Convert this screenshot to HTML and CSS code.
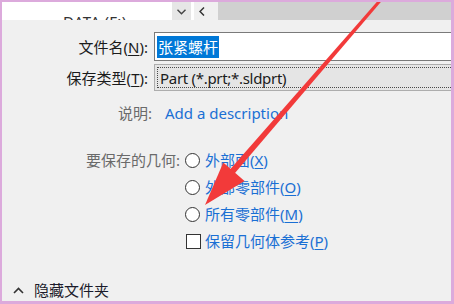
FILE: index.html
```html
<!DOCTYPE html>
<html lang="zh-CN">
<head>
    <meta charset="UTF-8">
    <meta name="viewport" content="width=device-width, initial-scale=1.0">
    <title>另存为</title>
    <link rel="stylesheet" href="styles.css">
</head>
<body>
    <div class="frame">
        <div class="crumbs">
            <div class="crumb-path"><span class="drive">DATA (F:)</span></div>
            <div class="crumb-drop">
                <svg width="9" height="6" viewBox="0 0 9 6"><path d="M0.5 0.8 L4.5 4.8 L8.5 0.8" fill="none" stroke="#444" stroke-width="1.4"/></svg>
            </div>
            <div class="crumb-back">
                <svg width="6" height="9" viewBox="0 0 6 9"><path d="M5 0.5 L1 4.5 L5 8.5" fill="none" stroke="#333" stroke-width="1.5"/></svg>
            </div>
            <div class="crumb-rest"></div>
        </div>

        <div class="panel">
            <div class="row row-name">
                <label class="label">文件名(<u>N</u>):</label>
                <div class="field"><span class="sel">张紧螺杆</span></div>
            </div>
            <div class="row row-type">
                <label class="label">保存类型(<u>T</u>):</label>
                <div class="combo"><div class="combo-focus">Part (*.prt;*.sldprt)</div></div>
            </div>
            <div class="row row-desc">
                <span class="label muted">说明:</span>
                <a href="#" class="link">Add a description</a>
            </div>
            <div class="row row-geo">
                <span class="label muted">要保存的几何:</span>
                <div class="options">
                    <div class="opt"><span class="radio"></span>外部面(<u>X</u>)</div>
                    <div class="opt"><span class="radio"></span>外部零部件(<u>O</u>)</div>
                    <div class="opt"><span class="radio"></span>所有零部件(<u>M</u>)</div>
                    <div class="opt"><span class="check"></span>保留几何体参考(<u>P</u>)</div>
                </div>
            </div>
            <div class="footer">
                <svg width="11" height="7" viewBox="0 0 11 7"><path d="M1 6 L5.5 1.5 L10 6" fill="none" stroke="#333" stroke-width="1.6"/></svg>
                <span>隐藏文件夹</span>
            </div>
        </div>

        <!-- red annotation arrow over the dialog -->
        <svg class="arrow" width="454" height="304" viewBox="0 0 454 304">
            <polygon points="382.9,-5 385.1,-3 233.3,175 228.7,171" fill="#f23a3a"/>
            <polygon points="205,205 223.3,162.6 244.5,181" fill="#f23a3a"/>
        </svg>
    </div>
</body>
</html>
```

FILE: styles.css
```css
html, body {
    margin: 0;
    padding: 0;
}
body {
    font-family: "Noto Sans", "Noto Sans CJK SC", sans-serif;
    font-size: 15px;
    color: #1b1b1b;
}
.frame {
    position: relative;
    width: 454px;
    height: 304px;
    box-sizing: border-box;
    border-style: solid;
    border-color: #dcaadc;
    border-width: 2px 3px 3px 2px;
    display: flex;
    flex-direction: column;
    overflow: hidden;
}

/* address bar, mostly hidden */
.crumbs {
    display: flex;
    height: 18px;
    flex-shrink: 0;
    overflow: hidden;
}
.crumb-path {
    width: 170px;
    background: #fff;
    overflow: hidden;
}
.drive {
    display: block;
    padding: 9px 0 0 61px;
    font-size: 15px;
    line-height: 20px;
    color: #333;
    letter-spacing: 0.3px;
}
.crumb-drop {
    width: 19px;
    background: #e6e6e6;
    display: flex;
    justify-content: center;
    padding-top: 7px;
    box-sizing: border-box;
}
.crumb-back {
    width: 27px;
    background: #f0f0f0;
    display: flex;
    justify-content: center;
    padding: 5px 8px 0 0;
    box-sizing: border-box;
    border-left: 3px solid #fff;
}
.crumb-rest {
    flex: 1;
    background: #d0d0d0;
}

.panel {
    flex: 1;
    background: #f0f0f0;
    display: flex;
    flex-direction: column;
}
.row {
    display: flex;
    align-items: center;
}
.label {
    text-align: right;
    flex-shrink: 0;
    line-height: 20px;
}
.label u, .opt u {
    text-underline-offset: 2px;
}
.muted {
    color: #6a6a6a;
}

.row-name {
    margin-top: 12px;
}
.row-name .label, .row-type .label {
    width: 146px;
    margin-right: 6px;
}
.field {
    flex: 1;
    height: 29px;
    box-sizing: border-box;
    border: 1px solid #7a7a7a;
    border-right: none;
    background: #fff;
    display: flex;
    align-items: center;
    padding-left: 2px;
}
.sel {
    background: #0078d7;
    color: #fff;
    line-height: 22px;
    padding: 0 1px;
}

.row-type {
    margin-top: 3px;
}
.combo {
    flex: 1;
    height: 27px;
    box-sizing: border-box;
    border: 1px solid #adadad;
    border-right: none;
    background: #e5e5e5;
    padding: 2px 0 2px 2px;
}
.combo-focus {
    height: 100%;
    box-sizing: border-box;
    border: 1px dotted #4a4a4a;
    border-right: none;
    line-height: 20px;
    padding-left: 2px;
    letter-spacing: -0.3px;
}

.row-desc {
    margin-top: 12px;
}
.row-desc .label {
    width: 150px;
}
.link {
    margin-left: 13px;
    color: #1a6fd4;
    text-decoration: none;
    line-height: 20px;
}

.row-geo {
    margin-top: 27px;
    align-items: flex-start;
}
.row-geo .label {
    width: 178px;
}
.options {
    margin-left: 5px;
    display: flex;
    flex-direction: column;
    gap: 7px;
}
.opt {
    display: flex;
    align-items: center;
    line-height: 20px;
    color: #1a6fd4;
}
.radio, .check {
    width: 15px;
    height: 15px;
    box-sizing: border-box;
    border: 1px solid #333;
    background: #fff;
    margin-right: 5px;
    flex-shrink: 0;
}
.radio {
    border-radius: 50%;
}
.check {
    margin-left: 1px;
    margin-right: 4px;
}

.footer {
    margin-top: auto;
    margin-bottom: 1px;
    display: flex;
    align-items: center;
    line-height: 20px;
    padding-left: 11px;
    color: #1b1b2b;
}
.footer svg {
    margin-right: 10px;
}

.arrow {
    position: absolute;
    left: -2px;
    top: -2px;
    pointer-events: none;
}
```
